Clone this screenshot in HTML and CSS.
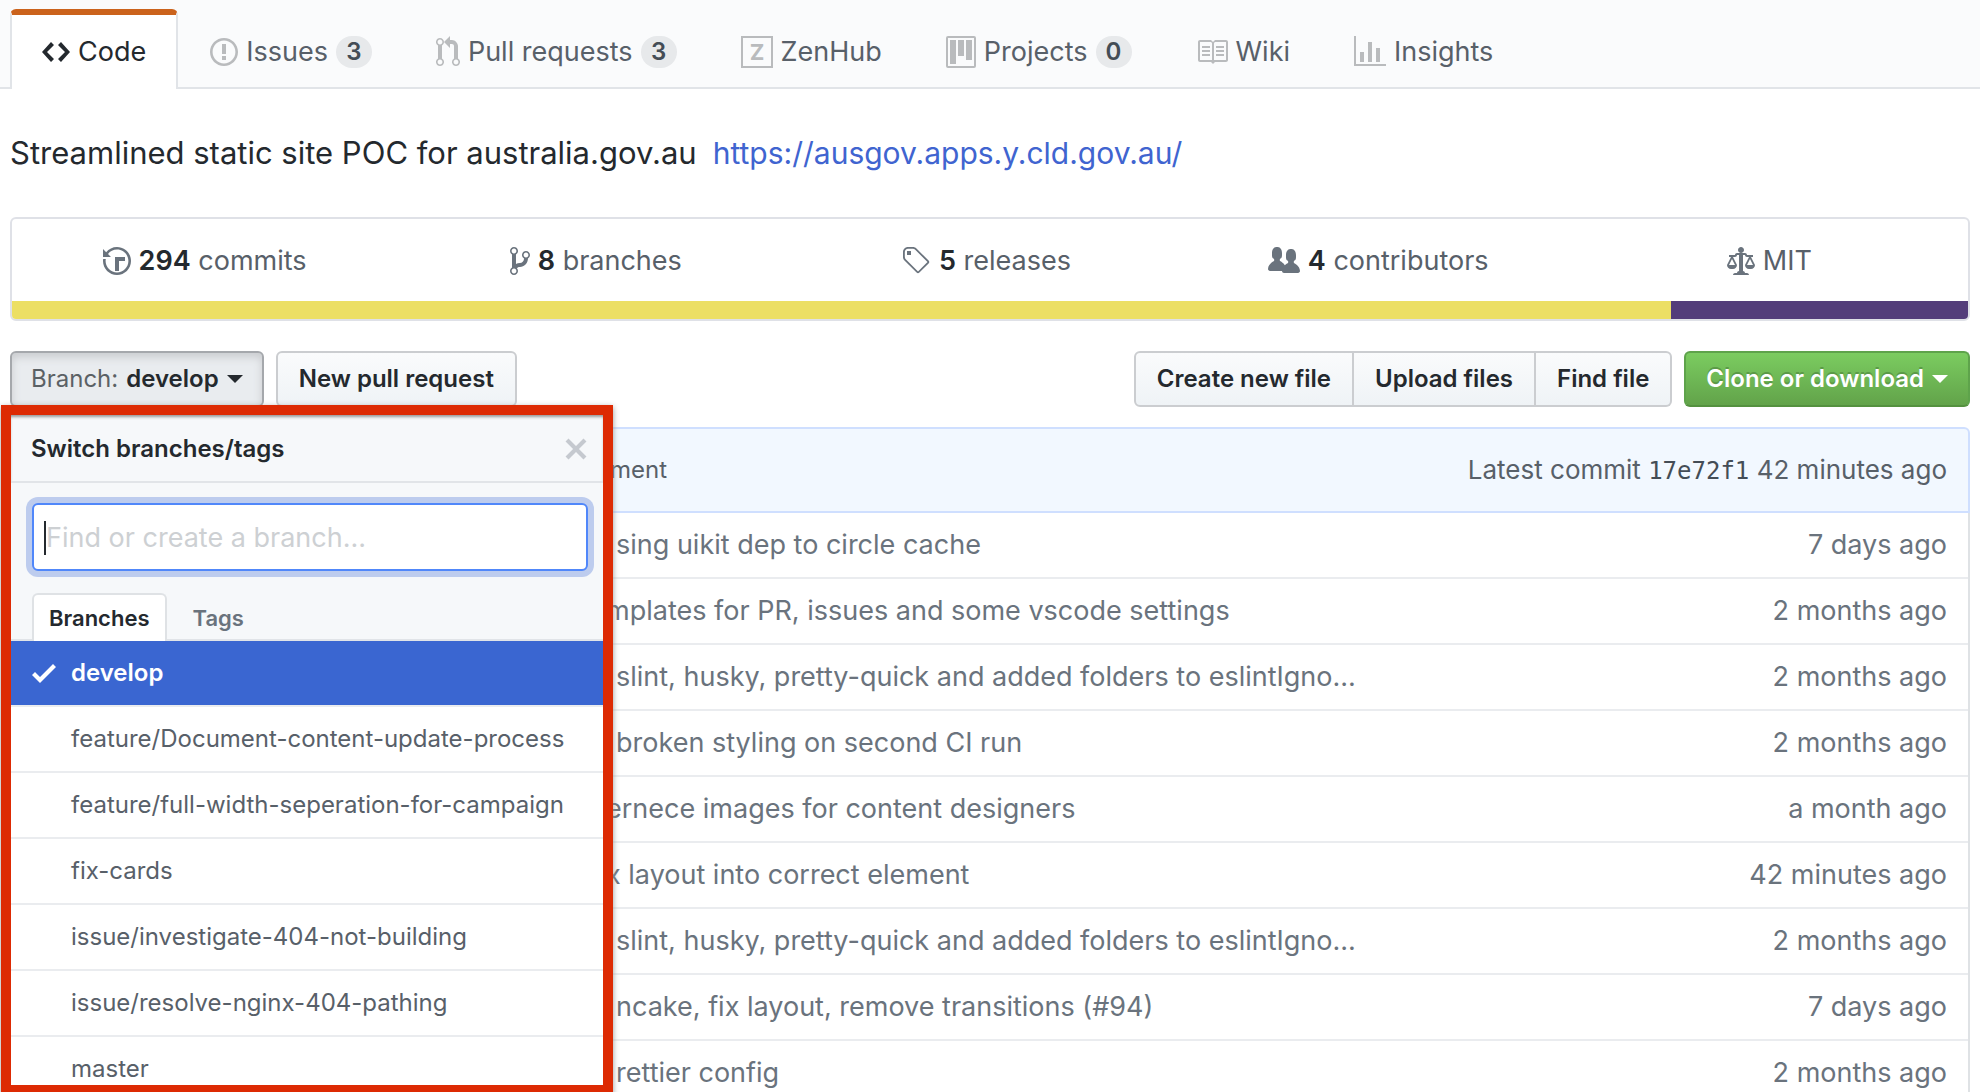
FILE: index.html
```html
<!DOCTYPE html>
<html lang="en">
<head>
<meta charset="utf-8">
<title>Streamlined static site POC for australia.gov.au</title>
<meta name="viewport" content="width=device-width, initial-scale=1">
<link rel="stylesheet" href="styles.css">
</head>
<body>
<header class="repo-head">
  <nav class="repo-nav" aria-label="Repository">
    <a class="tab tab-selected" href="#code" aria-current="page">
      <svg class="icon" width="28" height="32" viewBox="0 0 14 16" aria-hidden="true"><path d="M9.5 3L8 4.5 11.5 8 8 11.5 9.5 13 14 8 9.5 3zm-5 0L0 8l4.5 5L6 11.5 2.5 8 6 4.5 4.5 3z"/></svg>
      <span>Code</span>
    </a>
    <a class="tab" href="#issues">
      <svg class="icon" width="28" height="32" viewBox="0 0 14 16" aria-hidden="true"><path d="M7 2.3c3.14 0 5.7 2.56 5.7 5.7s-2.56 5.7-5.7 5.7A5.71 5.71 0 0 1 1.3 8c0-3.14 2.56-5.7 5.7-5.7zM7 1C3.14 1 0 4.14 0 8s3.14 7 7 7 7-3.14 7-7-3.14-7-7-7zm1 3H6v5h2V4zm0 6H6v2h2v-2z"/></svg>
      <span>Issues</span>
      <span class="counter">3</span>
    </a>
    <a class="tab" href="#pulls">
      <svg class="icon" width="24" height="32" viewBox="0 0 12 16" aria-hidden="true"><path d="M11 11.28V5c-.03-.78-.34-1.47-.94-2.06C9.46 2.35 8.78 2.03 8 2H7V0L4 3l3 3V4h1c.27.02.48.11.69.31.21.2.3.42.31.69v6.28A1.993 1.993 0 0 0 10 15a1.993 1.993 0 0 0 1-3.72zm-1 2.92c-.66 0-1.2-.55-1.2-1.2 0-.65.55-1.2 1.2-1.2.65 0 1.2.55 1.2 1.2 0 .65-.55 1.2-1.2 1.2zM4 3c0-1.11-.89-2-2-2a1.993 1.993 0 0 0-1 3.72v6.56A1.993 1.993 0 0 0 2 15a1.993 1.993 0 0 0 1-3.72V4.72c.59-.34 1-.98 1-1.72zm-.8 10c0 .66-.55 1.2-1.2 1.2-.65 0-1.2-.55-1.2-1.2 0-.65.55-1.2 1.2-1.2.65 0 1.2.55 1.2 1.2zM2 4.2C1.34 4.2.8 3.65.8 3c0-.65.55-1.2 1.2-1.2.65 0 1.2.55 1.2 1.2 0 .65-.55 1.2-1.2 1.2z"/></svg>
      <span>Pull requests</span>
      <span class="counter">3</span>
    </a>
    <a class="tab" href="#zenhub">
      <svg class="icon" width="32" height="32" viewBox="0 0 16 16" aria-hidden="true"><path d="M0 0h16v16H0zM1 1v14h14V1z" fill-rule="evenodd"/><text class="zen-letter" x="8" y="12" text-anchor="middle">Z</text></svg>
      <span>ZenHub</span>
    </a>
    <a class="tab" href="#projects">
      <svg class="icon" width="30" height="32" viewBox="0 0 15 16" aria-hidden="true"><path fill-rule="evenodd" d="M10 12h3V2h-3v10zm-4-2h3V2H6v8zm-4 4h3V2H2v12zm-1 1h13V1H1v14zM14 0H1a1 1 0 0 0-1 1v14a1 1 0 0 0 1 1h13a1 1 0 0 0 1-1V1a1 1 0 0 0-1-1z"/></svg>
      <span>Projects</span>
      <span class="counter">0</span>
    </a>
    <a class="tab" href="#wiki">
      <svg class="icon" width="32" height="32" viewBox="0 0 16 16" aria-hidden="true"><path d="M3 5h4v1H3V5zm0 3h4V7H3v1zm0 2h4V9H3v1zm11-5h-4v1h4V5zm0 2h-4v1h4V7zm0 2h-4v1h4V9zm2-6v9c0 .55-.45 1-1 1H9.500l-1 1-1-1H2c-.55 0-1-.45-1-1V3c0-.55.45-1 1-1h5.500l1 1 1-1H15c.55 0 1 .45 1 1zm-8 .5L7.500 3H2v9h6V3.500zm7-.5H9.500l-.5.5V12h6V3z"/></svg>
      <span>Wiki</span>
    </a>
    <a class="tab" href="#insights">
      <svg class="icon" width="32" height="32" viewBox="0 0 16 16" aria-hidden="true"><path d="M16 14v1H0V0h1v14h15zM5 13H3V8h2v5zm4 0H7V3h2v10zm4 0h-2V6h2v7z"/></svg>
      <span>Insights</span>
    </a>
  </nav>
</header>

<main class="page">
  <p class="about"><span>Streamlined static site POC for australia.gov.au</span> <a href="https://ausgov.apps.y.cld.gov.au/">https://ausgov.apps.y.cld.gov.au/</a></p>

  <section class="summary" aria-label="Repository summary">
    <ul class="stats">
      <li><a href="#commits">
        <svg class="icon" width="28" height="32" viewBox="0 0 14 16" aria-hidden="true"><path d="M8 13H6V6h5v2H8v5zM7 1C4.810 1 2.870 2.020 1.590 3.590L0 2v4h4L2.500 4.500C3.550 3.170 5.170 2.300 7 2.300c3.140 0 5.700 2.560 5.700 5.700s-2.560 5.700-5.700 5.700A5.710 5.710 0 0 1 1.300 8c0-.34.03-.67.09-1H.08C.03 7.330 0 7.660 0 8c0 3.860 3.140 7 7 7s7-3.140 7-7-3.140-7-7-7z"/></svg>
        <span><strong>294</strong> commits</span></a></li>
      <li><a href="#branches">
        <svg class="icon" width="20" height="32" viewBox="0 0 10 16" aria-hidden="true"><path d="M10 5c0-1.11-.89-2-2-2a1.993 1.993 0 0 0-1 3.720v.3c-.02.52-.23.98-.63 1.380-.4.4-.86.61-1.380.63-.83.02-1.480.16-2 .45V4.720a1.993 1.993 0 0 0-1-3.720C.88 1 0 1.890 0 3a2 2 0 0 0 1 1.720v6.560c-.59.35-1 .99-1 1.720 0 1.110.89 2 2 2 1.110 0 2-.89 2-2 0-.53-.2-1-.53-1.360.09-.06.48-.41.59-.47.25-.11.56-.17.94-.17 1.050-.05 1.950-.45 2.750-1.250S8.950 7.770 9 6.730h-.02C9.590 6.370 10 5.730 10 5zM2 1.800c.66 0 1.200.55 1.200 1.200 0 .65-.55 1.200-1.200 1.200C1.350 4.200.8 3.650.8 3c0-.65.55-1.200 1.200-1.200zm0 12.410c-.66 0-1.200-.55-1.200-1.200 0-.65.55-1.200 1.200-1.200.65 0 1.200.55 1.200 1.200 0 .65-.55 1.200-1.200 1.200zm6-8c-.66 0-1.200-.55-1.200-1.200 0-.65.55-1.200 1.200-1.200.65 0 1.200.55 1.200 1.200 0 .65-.55 1.200-1.200 1.200z"/></svg>
        <span><strong>8</strong> branches</span></a></li>
      <li><a href="#releases">
        <svg class="icon" width="28" height="32" viewBox="1 0 14 16" aria-hidden="true"><path d="M7.730 1.730C7.260 1.260 6.620 1 5.960 1H3.500C2.130 1 1 2.130 1 3.500v2.470c0 .66.27 1.300.73 1.770l6.060 6.060c.39.39 1.020.39 1.410 0l4.590-4.590a.996.996 0 0 0 0-1.410L7.730 1.730zM2.380 7.090c-.31-.3-.47-.7-.47-1.130V3.500c0-.88.72-1.590 1.590-1.590h2.470c.42 0 .83.16 1.130.47l6.140 6.130-4.730 4.730-6.130-6.150zM3.010 3h2v2H3V3h.01z"/></svg>
        <span><strong>5</strong> releases</span></a></li>
      <li><a href="#contributors">
        <svg class="icon" width="32" height="32" viewBox="0 0 16 16" aria-hidden="true"><path d="M16 12.999c0 .439-.45 1-1 1H7.995c-.539 0-.994-.447-.995-.999H1c-.54 0-1-.561-1-1 0-2.634 3-4 3-4s.229-.409 0-1c-.841-.621-1.058-.59-1-3 .058-2.419 1.367-3 2.500-3s2.442.58 2.500 3c.058 2.410-.159 2.379-1 3-.229.59 0 1 0 1s1.549.711 2.420 2.088C9.196 9.369 10 8.999 10 8.999s.229-.409 0-1c-.841-.62-1.058-.59-1-3 .058-2.419 1.367-3 2.500-3s2.437.581 2.495 3c.059 2.410-.158 2.380-1 3-.229.59 0 1 0 1s3.005 1.366 3.005 4"/></svg>
        <span><strong>4</strong> contributors</span></a></li>
      <li><a href="#license">
        <svg class="icon" width="28" height="32" viewBox="0 0 14 16" aria-hidden="true"><path d="M7 4c-.83 0-1.500-.67-1.500-1.500S6.170 1 7 1s1.500.67 1.500 1.500S7.830 4 7 4zm7 6c0 1.110-.89 2-2 2h-1c-1.110 0-2-.89-2-2l2-4h-1c-.55 0-1-.45-1-1H8v8c.42 0 1 .45 1 1h1c.42 0 1 .45 1 1H3c0-.55.58-1 1-1h1c0-.55.58-1 1-1h.03L6 5H5c0 .55-.45 1-1 1H3l2 4c0 1.110-.89 2-2 2H2c-1.110 0-2-.89-2-2l2-4H1V5h3c0-.55.45-1 1-1h4c.55 0 1 .45 1 1h3v1h-1l2 4zM2.500 7L1 10h3L2.500 7zM13 10l-1.500-3-1.500 3h3z"/></svg>
        <span>MIT</span></a></li>
    </ul>
    <div class="languages">
      <span class="lang lang-js" style="width: 84.8%"></span>
      <span class="lang lang-css"></span>
    </div>
  </section>

  <div class="toolbar">
    <div class="branch-picker">
      <button class="btn btn-pressed" type="button" aria-expanded="true"><span class="muted">Branch:</span> develop<span class="caret"></span></button>

      <div class="callout">
        <div class="menu-head">
          <h2>Switch branches/tags</h2>
          <button class="close" type="button" aria-label="Close"><svg width="24" height="32" viewBox="0 0 12 16" aria-hidden="true"><path d="M7.480 8l3.750 3.750-1.480 1.480L6 9.480l-3.750 3.750-1.480-1.480L4.520 8 .77 4.250l1.480-1.480L6 6.520l3.750-3.750 1.480 1.480L7.480 8z"/></svg></button>
        </div>
        <div class="menu-filter">
          <div class="search">
            <input class="search-box" type="text" placeholder="Find or create a branch..." aria-label="Find or create a branch">
            <span class="text-cursor"></span>
          </div>
          <div class="menu-tabs">
            <button class="menu-tab menu-tab-selected" type="button">Branches</button>
            <button class="menu-tab" type="button">Tags</button>
          </div>
        </div>
        <ul class="branches">
          <li class="current"><a href="#develop"><svg width="24" height="32" viewBox="0 0 12 16" aria-hidden="true"><path d="M12 5l-8 8-4-4 1.500-1.500L4 10l6.500-6.500L12 5z"/></svg>develop</a></li>
          <li><a href="#b1">feature/Document-content-update-process</a></li>
          <li><a href="#b2">feature/full-width-seperation-for-campaign</a></li>
          <li><a href="#b3">fix-cards</a></li>
          <li><a href="#b4">issue/investigate-404-not-building</a></li>
          <li><a href="#b5">issue/resolve-nginx-404-pathing</a></li>
          <li><a href="#master">master</a></li>
        </ul>
      </div>
    </div>
    <button class="btn" type="button">New pull request</button>
    <div class="btn-group">
      <button class="btn" type="button">Create new file</button>
      <button class="btn" type="button">Upload files</button>
      <button class="btn" type="button">Find file</button>
    </div>
    <button class="btn btn-primary" type="button">Clone or download<span class="caret"></span></button>
  </div>

  <div class="commit-bar">
    <span class="commit-title">ment</span>
    <span class="commit-meta">Latest commit <a href="#17e72f1">17e72f1</a> 42 minutes ago</span>
  </div>
  <table class="files">
    <tbody>
      <tr><td>sing uikit dep to circle cache</td><td>7 days ago</td></tr>
      <tr><td class="tucked">mplates for PR, issues and some vscode settings</td><td>2 months ago</td></tr>
      <tr><td>slint, husky, pretty-quick and added folders to eslintIgno...</td><td>2 months ago</td></tr>
      <tr><td>broken styling on second CI run</td><td>2 months ago</td></tr>
      <tr><td class="tucked">ernece images for content designers</td><td>a month ago</td></tr>
      <tr><td class="tucked">x layout into correct element</td><td>42 minutes ago</td></tr>
      <tr><td>slint, husky, pretty-quick and added folders to eslintIgno...</td><td>2 months ago</td></tr>
      <tr><td>ncake, fix layout, remove transitions (#94)</td><td>7 days ago</td></tr>
      <tr><td>rettier config</td><td>2 months ago</td></tr>
    </tbody>
  </table>
</main>
</body>
</html>
```
FILE: styles.css
```css
* {
  box-sizing: border-box;
}

body {
  margin: 0;
  height: 100vh;
  overflow: hidden;
  background: #fff;
  color: #24292e;
  font-family: Inter, "Liberation Sans", sans-serif;
  font-size: 27px;
  line-height: 42px;
}

a {
  color: inherit;
  text-decoration: none;
}

ul {
  margin: 0;
  padding: 0;
  list-style: none;
}

button {
  font: inherit;
  color: inherit;
}

svg {
  display: block;
  flex: none;
  fill: currentColor;
}

/* Repository tabs */
.repo-head {
  padding: 9px 10px 0;
  background: #fafbfc;
  border-bottom: 2px solid #e1e4e8;
}

.repo-nav {
  display: flex;
  height: 78px;
}

.tab {
  display: flex;
  align-items: center;
  gap: 8px;
  height: 80px;
  padding: 7px 32px 1px;
  color: #586069;
  white-space: nowrap;
}

.tab .icon {
  color: #b9bbbd;
}

.tab-selected {
  padding: 1px 30px;
  border: 2px solid #e1e4e8;
  border-top: 6px solid #cb631c;
  border-bottom: 0;
  border-radius: 6px 6px 0 0;
  background: #fff;
  color: #24292e;
}

.tab-selected .icon {
  color: #24292e;
}

.zen-letter {
  font-size: 11px;
  font-weight: 700;
}

.counter {
  min-width: 36px;
  height: 32px;
  padding: 0 10px;
  border-radius: 16px;
  background: #e7e9eb;
  color: #444d56;
  font-size: 24px;
  font-weight: 600;
  line-height: 32px;
  text-align: center;
}

/* Description */
.page {
  padding: 0 10px;
}

.about {
  display: flex;
  gap: 16px;
  margin: 40px 0;
  font-size: 31px;
  line-height: 48px;
}

.about a {
  color: #4064d0;
  font-size: 30px;
}

/* Summary strip */
.summary {
  border: 2px solid #dfe1e7;
  border-radius: 6px;
  overflow: hidden;
}

.stats {
  display: grid;
  grid-template-columns: repeat(5, 1fr);
}

.stats a {
  display: flex;
  justify-content: center;
  align-items: center;
  gap: 8px;
  height: 82px;
  padding: 2px 6px 0 0;
  color: #586069;
  white-space: nowrap;
}

.stats .icon {
  color: #6a737d;
}

.stats strong {
  color: #24292e;
  font-weight: 600;
}

.languages {
  display: flex;
  height: 18px;
}

.lang-js {
  background: #ecdf64;
}

.lang-css {
  flex: 1;
  background: #533d7a;
}

/* Buttons */
.toolbar {
  display: flex;
  gap: 12px;
  margin: 30px 0 20px;
}

.btn {
  display: flex;
  align-items: center;
  gap: 8px;
  height: 56px;
  padding: 0 21px;
  border: 2px solid #cbcdd0;
  border-radius: 6px;
  background: linear-gradient(#fafbfc, #eff3f6);
  font-size: 24px;
  font-weight: 600;
  line-height: 40px;
  white-space: nowrap;
}

.btn-pressed {
  padding: 0 19px;
  border-color: #a5a8ac;
  background: #e9ecef;
  box-shadow: inset 0 4px 8px #c9cbce;
}

.muted {
  color: #5b6165;
  font-weight: 400;
}

.caret {
  border: 8px solid transparent;
  border-top-color: currentColor;
  border-bottom: 0;
}

.btn-group {
  display: flex;
  margin-left: auto;
}

.btn-group .btn {
  border-radius: 0;
}

.btn-group .btn + .btn {
  border-left: 0;
}

.btn-group .btn:first-child {
  border-radius: 6px 0 0 6px;
}

.btn-group .btn:last-child {
  border-radius: 0 6px 6px 0;
}

.btn-primary {
  padding: 0 20px;
  border-color: #5ea34b;
  border-bottom-color: #54913f;
  background: linear-gradient(#7bcc60, #62a34a);
  color: #fff;
  text-shadow: 0 -2px 0 #5b9a47;
}

/* Branch menu */
.branch-picker {
  position: relative;
}

.callout {
  position: absolute;
  z-index: 1;
  top: 54px;
  left: -9px;
  width: 612px;
  border: 10px solid #dd2a03;
  background: #fff;
  box-shadow: 0 2px 6px #999;
}

.menu-head {
  display: flex;
  justify-content: space-between;
  align-items: center;
  height: 68px;
  padding: 2px 15px 0 20px;
  border-bottom: 2px solid #e1e4e8;
  background: #f6f8fa;
  box-shadow: inset 0 3px 3px -1px #999;
}

.menu-head h2 {
  margin: 0;
  font-size: 24px;
  font-weight: 600;
  line-height: 36px;
}

.close {
  padding: 0;
  border: 0;
  background: none;
  color: #c5c9cf;
}

.menu-filter {
  padding: 20px 15px 0 21px;
  border-bottom: 2px solid #e1e4e8;
  background: #f6f8fa;
}

.search {
  position: relative;
}

.search-box {
  display: block;
  width: 100%;
  height: 68px;
  padding: 0 12px;
  border: 2px solid #5087fa;
  border-radius: 6px;
  outline: 0;
  background: #fff;
  box-shadow: 0 0 0 6px #bdccee;
  color: #24292e;
  font: inherit;
}

.search-box::placeholder {
  color: #cdd0d3;
  opacity: 1;
}

.text-cursor {
  position: absolute;
  top: 18px;
  left: 12px;
  width: 2px;
  height: 34px;
  background: #24292e;
}

.menu-tabs {
  display: flex;
  margin: 22px 0 -2px;
}

.menu-tab {
  height: 48px;
  padding: 0 15px;
  border: 2px solid transparent;
  border-bottom: 0;
  background: none;
  color: #6a737d;
  font-size: 22px;
  font-weight: 600;
  line-height: 36px;
}

.menu-tab + .menu-tab {
  margin-left: 9px;
}

.menu-tab-selected {
  border-color: #dfe2e5;
  border-radius: 6px 6px 0 0;
  background: #fff;
  color: #24292e;
}

.branches {
  max-height: 444px;
  overflow: hidden;
  color: #586069;
  font-size: 24px;
}

.branches a {
  display: flex;
  align-items: center;
  height: 66px;
  padding: 0 20px 0 60px;
  border-bottom: 2px solid #eaecef;
  white-space: nowrap;
}

.branches .current a {
  gap: 15px;
  padding-left: 21px;
  background: #3a66d1;
  background-clip: padding-box;
  color: #fff;
  font-weight: 600;
}

/* Latest commit and file list */
.commit-bar {
  display: flex;
  justify-content: space-between;
  align-items: center;
  height: 86px;
  padding: 0 21px 0 598px;
  border: 2px solid #cfdfff;
  border-radius: 6px 6px 0 0;
  background: #f2f8ff;
  color: #586069;
  font-size: 26px;
}

.commit-title {
  font-size: 24px;
}

.commit-meta a {
  color: #444d56;
  font-family: "DejaVu Sans Mono", "Liberation Mono", monospace;
  font-size: 24px;
}

.files {
  width: 100%;
  border: 2px solid #dfe2e5;
  border-top: 0;
  border-collapse: separate;
  border-spacing: 0;
  color: #6a737d;
}

.files td {
  height: 66px;
  padding: 0 0 0 604px;
  border-bottom: 2px solid #eaecef;
  white-space: nowrap;
}

.files .tucked {
  padding-left: 594px;
}

.files td:last-child {
  padding: 0 21px;
  text-align: right;
}
```
